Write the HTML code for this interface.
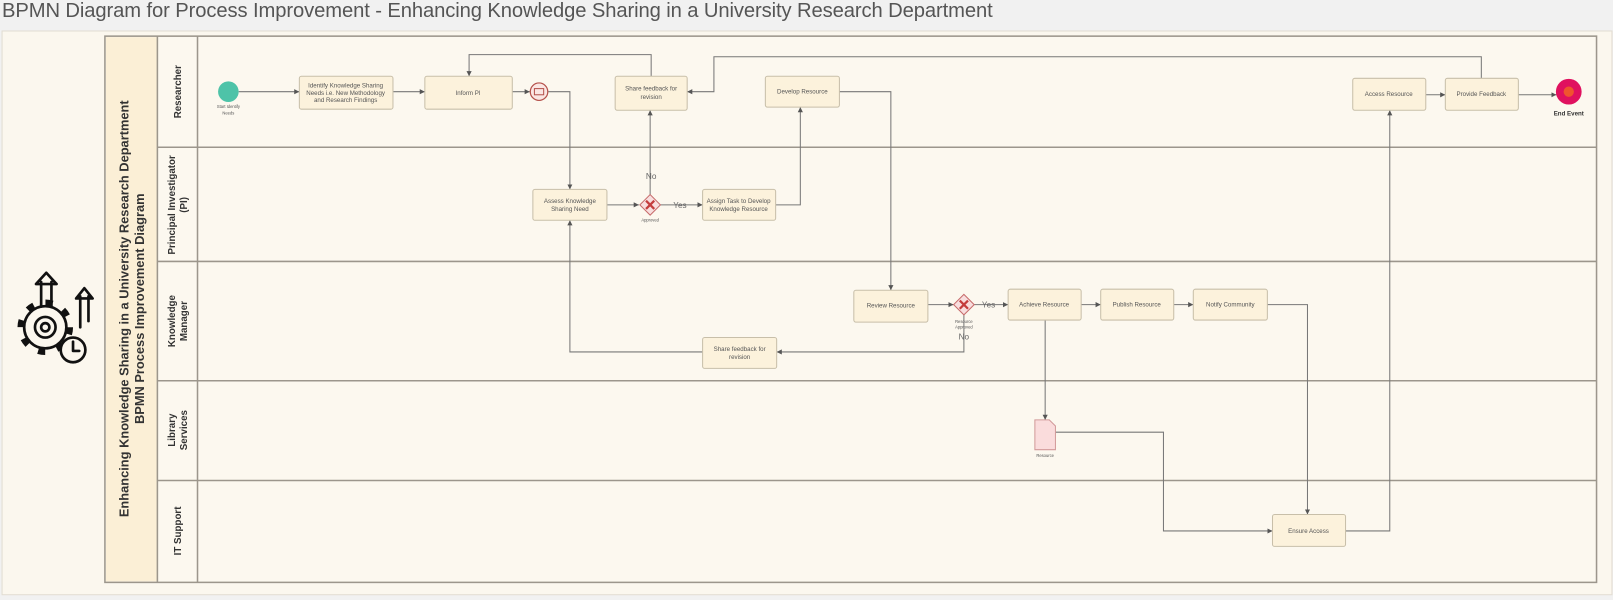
<!DOCTYPE html>
<html><head><meta charset="utf-8"><style>
body{margin:0;width:1613px;height:600px;background:#f1f1f1;overflow:hidden;font-family:"Liberation Sans",sans-serif}
.t{position:absolute;left:2px;top:0;font-size:20.2px;color:#555;white-space:nowrap;letter-spacing:-0.1px}
svg{position:absolute;left:0;top:0}
</style></head><body>
<div class="t">BPMN Diagram for Process Improvement - Enhancing Knowledge Sharing in a University Research Department</div>
<svg width="1613" height="600" viewBox="0 0 1568 583" font-family="Liberation Sans, sans-serif">
<defs><marker id="a" markerWidth="6" markerHeight="6" refX="5" refY="3" orient="auto"><path d="M0,0.5 L5,3 L0,5.5z" fill="#555"/></marker></defs>
<rect x="2" y="30" width="1565" height="548" fill="#fbf7ee" stroke="#e2ddd2"/>
<rect x="102" y="35" width="1450" height="531" fill="#fcf8ef" stroke="#9c968c" stroke-width="1.5"/>
<rect x="103" y="36" width="50" height="529" fill="#fbefd6"/>
<g stroke="#9c968c" stroke-width="1.5" fill="none">
<line x1="153" y1="35" x2="153" y2="566"/><line x1="192" y1="35" x2="192" y2="566"/>
<line x1="153" y1="143" x2="1552" y2="143"/><line x1="153" y1="254" x2="1552" y2="254"/>
<line x1="153" y1="370" x2="1552" y2="370"/><line x1="153" y1="467" x2="1552" y2="467"/>
</g>
<g font-weight="bold" fill="#333" text-anchor="middle">
<text transform="translate(125,300) rotate(-90)" font-size="12.5">Enhancing Knowledge Sharing in a University Research Department</text>
<text transform="translate(140,300) rotate(-90)" font-size="12.5">BPMN Process Improvement Diagram</text>
<g font-size="9.5">
<text transform="translate(176,89) rotate(-90)">Researcher</text>
<text transform="translate(170,199) rotate(-90)">Principal Investigator</text>
<text transform="translate(182,199) rotate(-90)">(PI)</text>
<text transform="translate(170,312) rotate(-90)">Knowledge</text>
<text transform="translate(182,312) rotate(-90)">Manager</text>
<text transform="translate(170,418) rotate(-90)">Library</text>
<text transform="translate(182,418) rotate(-90)">Services</text>
<text transform="translate(176,516) rotate(-90)">IT Support</text>
</g></g>
<!-- icon -->
<g fill="none" stroke="#111" stroke-linejoin="round" stroke-linecap="round">
<circle cx="44" cy="318" r="24" stroke-width="6" stroke-dasharray="7 11.85" stroke-linecap="butt"/>
<circle cx="44" cy="318" r="20.5" stroke-width="2.6" fill="#fbf7ee"/>
<circle cx="44" cy="318" r="10" stroke-width="2.6"/><circle cx="44" cy="318" r="4" stroke-width="2.6"/>
<circle cx="71" cy="340" r="12" stroke-width="2.6" fill="#fbf7ee"/><path d="M71,332 v9 h6" stroke-width="2.6"/>
<path d="M40,298 v-24 M50,298 v-24 M35,276 l10,-11 l10,11 z" stroke-width="2.6" fill="#fbf7ee"/>
<path d="M78,318 v-30 M86,312 v-24 M74,290 l8,-10 l8,10 z" stroke-width="2.6" fill="#fbf7ee"/>
</g>
<!-- connectors -->
<g stroke="#777" stroke-width="1" fill="none" marker-end="url(#a)">
<path d="M232,89 H291"/><path d="M382,89 H413"/><path d="M498,89 H515"/>
<path d="M533,89 H554 V184"/><path d="M590,199 H621"/><path d="M632,189 V107"/>
<path d="M642,199 H683"/><path d="M754,199 H778 V104"/>
<path d="M633,74 V53 H456 V74"/><path d="M1440,76 V55 H694 V89 H668"/>
<path d="M816,89 H866 V282"/><path d="M902,296 H927"/><path d="M947,296 H980"/>
<path d="M937,306 V342 H755"/><path d="M683,342 H554 V214"/>
<path d="M1051,296 H1070"/><path d="M1141,296 H1160"/>
<path d="M1016,311 V408"/><path d="M1026,420 H1131 V516 H1237"/>
<path d="M1232,296 H1271 V500"/><path d="M1308,516 H1351 V107"/>
<path d="M1386,92 H1405"/><path d="M1476,92 H1513"/>
</g>
<!-- tasks -->
<g fill="#fcf2dc" stroke="#c8bfa9" stroke-width="1">
<rect x="291" y="74" width="91" height="32" rx="2"/><rect x="413" y="74" width="85" height="32" rx="2"/>
<rect x="598" y="74" width="70" height="33" rx="2"/><rect x="744" y="74" width="72" height="30" rx="2"/>
<rect x="1315" y="76" width="71" height="31" rx="2"/><rect x="1405" y="76" width="71" height="31" rx="2"/>
<rect x="518" y="184" width="72" height="30" rx="2"/><rect x="683" y="184" width="71" height="30" rx="2"/>
<rect x="830" y="282" width="72" height="31" rx="2"/><rect x="980" y="281" width="71" height="30" rx="2"/>
<rect x="1070" y="281" width="71" height="30" rx="2"/><rect x="1160" y="281" width="72" height="30" rx="2"/>
<rect x="683" y="328" width="72" height="30" rx="2"/><rect x="1237" y="500" width="71" height="31" rx="2"/>
</g>
<g font-size="6" fill="#555" text-anchor="middle">
<text x="336" y="85">Identify Knowledge Sharing</text><text x="336" y="92">Needs i.e. New Methodology</text><text x="336" y="99">and Research Findings</text>
<text x="455" y="92">Inform PI</text>
<text x="633" y="88">Share feedback for</text><text x="633" y="96">revision</text>
<text x="780" y="91">Develop Resource</text>
<text x="1350" y="93">Access Resource</text><text x="1440" y="93">Provide Feedback</text>
<text x="554" y="197">Assess Knowledge</text><text x="554" y="205">Sharing Need</text>
<text x="718" y="197">Assign Task to Develop</text><text x="718" y="205">Knowledge Resource</text>
<text x="866" y="299">Review Resource</text><text x="1015" y="298">Achieve Resource</text>
<text x="1105" y="298">Publish Resource</text><text x="1196" y="298">Notify Community</text>
<text x="719" y="341">Share feedback for</text><text x="719" y="349">revision</text>
<text x="1272" y="518">Ensure Access</text>
<text x="222" y="105" font-size="4">Start Identify</text><text x="222" y="111" font-size="4">Needs</text>
<text x="632" y="215" font-size="4">Approved</text><text x="937" y="314" font-size="4">Resource</text><text x="937" y="319" font-size="4">Approved</text>
<text x="1016" y="444" font-size="4">Resource</text>
</g>
<g font-size="8" fill="#666" text-anchor="middle">
<text x="633" y="174">No</text><text x="661" y="202">Yes</text><text x="961" y="299">Yes</text><text x="937" y="330">No</text>
</g>
<circle cx="222" cy="89" r="10" fill="#4ec3a8"/>
<circle cx="524" cy="89" r="8.5" fill="#fbe6e3" stroke="#b5524c" stroke-width="1.2"/>
<rect x="519.5" y="86" width="9" height="6" fill="none" stroke="#b5524c"/>
<g stroke="#c76b6b" fill="#f8dede">
<path d="M632,189 L642,199 L632,209 L622,199z"/><path d="M937,286 L947,296 L937,306 L927,296z"/>
</g>
<g stroke="#c43d3d" stroke-width="2.2"><path d="M628,195 l8,8 M636,195 l-8,8 M933,292 l8,8 M941,292 l-8,8"/></g>
<path d="M1006,408 H1020 L1026,414 V437 H1006z" fill="#fadcdc" stroke="#d29a9a"/>
<circle cx="1525" cy="89" r="12.5" fill="#e0115f"/><circle cx="1525" cy="89" r="5" fill="#f0542e"/>
<text x="1525" y="112" font-size="6" font-weight="bold" text-anchor="middle" fill="#333">End Event</text>
</svg>
</body></html>
